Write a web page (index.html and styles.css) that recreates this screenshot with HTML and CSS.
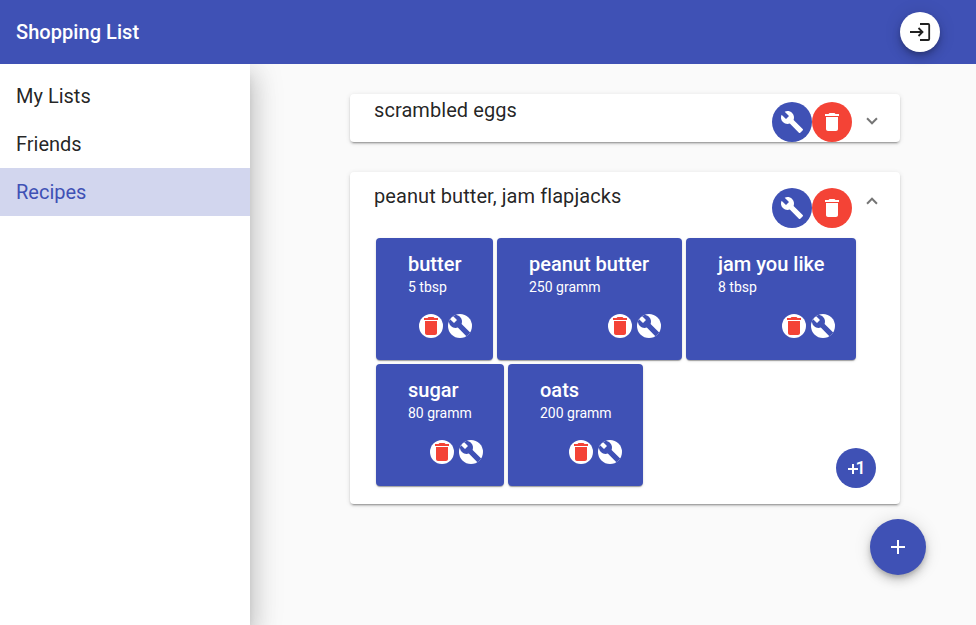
FILE: index.html
```html
<!DOCTYPE html>
<html lang="en">
<head>
<meta charset="utf-8">
<title>Shopping List</title>
<link rel="stylesheet" href="styles.css">
</head>
<body>
<svg class="defs" aria-hidden="true">
  <symbol id="build" viewBox="0 0 24 24"><path d="M22.7 19l-9.1-9.1c.9-2.3.4-5-1.5-6.9-2-2-5-2.4-7.4-1.3L9 6 6 9 1.6 4.7C.4 7.1.9 10.1 2.9 12.1c1.9 1.9 4.6 2.4 6.9 1.5l9.1 9.1c.4.4 1 .4 1.4 0l2.3-2.3c.5-.4.5-1.1.1-1.4z"/></symbol>
  <symbol id="delete" viewBox="0 0 24 24"><path d="M6 19c0 1.1.9 2 2 2h8c1.1 0 2-.9 2-2V7H6v12zM19 4h-3.500l-1-1h-5l-1 1H5v2h14V4z"/></symbol>
</svg>
<header class="toolbar">
  <h1 class="brand">Shopping List</h1>
  <button class="fab fab-exit" aria-label="Log out"><svg class="icon" viewBox="0 0 24 24"><path d="M12 4h8.200a1 1 0 0 1 1 1v14a1 1 0 0 1-1 1H12M2 12h12.500M10.500 8l4 4-4 4"/></svg></button>
</header>
<div class="layout">
  <nav class="sidenav">
    <a class="nav-item">My Lists</a>
    <a class="nav-item">Friends</a>
    <a class="nav-item active">Recipes</a>
  </nav>
  <main class="content">
    <section class="panel closed">
      <div class="panel-header">
        <h2 class="panel-title">scrambled eggs</h2>
        <button class="round primary" aria-label="Edit"><svg class="icon"><use href="#build"/></svg></button>
        <button class="round warn" aria-label="Delete"><svg class="icon"><use href="#delete"/></svg></button>
        <span class="chevron"></span>
      </div>
    </section>
    <section class="panel open">
      <div class="panel-header">
        <h2 class="panel-title">peanut butter, jam flapjacks</h2>
        <button class="round primary" aria-label="Edit"><svg class="icon"><use href="#build"/></svg></button>
        <button class="round warn" aria-label="Delete"><svg class="icon"><use href="#delete"/></svg></button>
        <span class="chevron up"></span>
      </div>
      <div class="tiles">
        <article class="tile butter">
          <h3 class="tile-title">butter</h3><p class="amount">5 tbsp</p>
          <div class="actions"><svg class="mini remove"><use href="#delete"/></svg><svg class="mini edit"><use href="#build"/></svg></div>
        </article>
        <article class="tile peanut">
          <h3 class="tile-title">peanut butter</h3><p class="amount">250 gramm</p>
          <div class="actions"><svg class="mini remove"><use href="#delete"/></svg><svg class="mini edit"><use href="#build"/></svg></div>
        </article>
        <article class="tile jam">
          <h3 class="tile-title">jam you like</h3><p class="amount">8 tbsp</p>
          <div class="actions"><svg class="mini remove"><use href="#delete"/></svg><svg class="mini edit"><use href="#build"/></svg></div>
        </article>
        <article class="tile sugar">
          <h3 class="tile-title">sugar</h3><p class="amount">80 gramm</p>
          <div class="actions"><svg class="mini remove"><use href="#delete"/></svg><svg class="mini edit"><use href="#build"/></svg></div>
        </article>
        <article class="tile oats">
          <h3 class="tile-title">oats</h3><p class="amount">200 gramm</p>
          <div class="actions"><svg class="mini remove"><use href="#delete"/></svg><svg class="mini edit"><use href="#build"/></svg></div>
        </article>
      </div>
      <button class="round primary plus-one" aria-label="Add ingredient"><svg class="plus" viewBox="0 0 10 10"><path d="M4 0h2v4h4v2H6v4H4V6H0V4h4z"/></svg><span class="one">1</span></button>
    </section>
    <button class="fab fab-add" aria-label="Add recipe"><svg class="icon" viewBox="0 0 24 24"><path d="M19 13h-6v6h-2v-6H5v-2h6V5h2v6h6v2z"/></svg></button>
  </main>
</div>
</body>
</html>
```
FILE: styles.css
```css
* { box-sizing: border-box; }
body { margin: 0; height: 625px; overflow: hidden; background: #fafafa; color: rgba(0,0,0,.87); font-family: Roboto, "Liberation Sans", sans-serif; display: flex; flex-direction: column; }
h1, h2, h3, p { margin: 0; font-weight: 500; }
button { border: 0; padding: 0; font: inherit; color: inherit; }
.defs { display: none; }
.icon { display: block; width: 24px; height: 24px; fill: currentColor; }
.toolbar { height: 64px; flex: none; padding: 0 36px 0 16px; background: #3f51b5; color: #fff; display: flex; align-items: center; justify-content: space-between; }
.brand { font-size: 20px; line-height: 32px; letter-spacing: .05px; }
.fab { display: flex; align-items: center; justify-content: center; border-radius: 50%; box-shadow: 0 3px 5px -1px rgba(0,0,0,.2), 0 6px 10px rgba(0,0,0,.14), 0 1px 18px rgba(0,0,0,.12); }
.fab-exit { width: 40px; height: 40px; background: #fff; color: #212121; }
.fab-exit .icon { fill: none; stroke: currentColor; stroke-width: 1.8; }
.layout { flex: 1; display: flex; overflow: hidden; }
.sidenav { width: 250px; flex: none; padding-top: 8px; background: #fff; box-shadow: 0 8px 10px -5px rgba(0,0,0,.2), 0 16px 24px 2px rgba(0,0,0,.14), 0 6px 30px 5px rgba(0,0,0,.12); }
.nav-item { display: flex; align-items: center; height: 48px; padding: 0 16px; font-size: 20px; }
.nav-item.active { background: #d2d6ee; color: #3f51b5; }
.content { flex: 1; padding: 30px 50px 0 100px; display: flex; flex-direction: column; }
.panel { width: 550px; background: #fff; border-radius: 4px; box-shadow: 0 3px 1px -2px rgba(0,0,0,.2), 0 2px 2px rgba(0,0,0,.14), 0 1px 5px rgba(0,0,0,.12); }
.closed { height: 48px; margin-bottom: 30px; }
.open { height: 332px; display: flex; flex-direction: column; }
.panel-header { display: flex; align-items: flex-start; padding: 8px 20px 0 24px; }
.open .panel-header { padding-top: 16px; height: 66px; flex: none; }
.panel-title { flex: 1; font-size: 20px; font-weight: 400; line-height: 32px; letter-spacing: .07px; margin-top: -8px; }
.round { width: 40px; height: 40px; flex: none; border-radius: 50%; display: flex; align-items: center; justify-content: center; color: #fff; }
.primary, .fab-add { background: #3f51b5; color: #fff; }
.warn { background: #f44336; }
.chevron { width: 8px; height: 8px; margin: 13px 4px 0 16px; border: solid rgba(0,0,0,.54); border-width: 0 2px 2px 0; transform: rotate(45deg); }
.chevron.up { margin-top: 11px; transform: rotate(225deg); }
.tiles { width: 490px; margin-left: 26px; display: flex; flex-wrap: wrap; align-content: flex-start; gap: 4px; height: 210px; flex: none; }
.tile { height: 122px; padding: 10px 21px 0 32px; border-radius: 4px; background: #3f51b5; color: #fff; box-shadow: 0 2px 1px -1px rgba(0,0,0,.2), 0 1px 1px rgba(0,0,0,.14), 0 1px 3px rgba(0,0,0,.12); }
.butter { width: 117px; }
.peanut { width: 185px; }
.jam { width: 170px; }
.sugar { width: 128px; }
.oats { width: 135px; }
.tile-title { font-size: 20px; line-height: 32px; white-space: nowrap; }
.amount { font-size: 14px; font-weight: 400; line-height: 14px; white-space: nowrap; }
.actions { display: flex; justify-content: flex-end; gap: 5px; margin-top: 20px; }
.mini { width: 24px; height: 24px; border-radius: 50%; background: #fff; flex: none; }
.remove { fill: #f44336; }
.edit { fill: #3f51b5; }
.plus-one { align-self: flex-end; margin-right: 24px; }
.plus { width: 10px; height: 10px; flex: none; margin: 2px 0 0 2px; fill: #fff; }
.one { font-size: 18px; font-weight: 500; line-height: 20px; margin: -1px 0 0 -3px; }
.fab-add { width: 56px; height: 56px; flex: none; align-self: flex-end; margin: 15px 0 0; }
```
